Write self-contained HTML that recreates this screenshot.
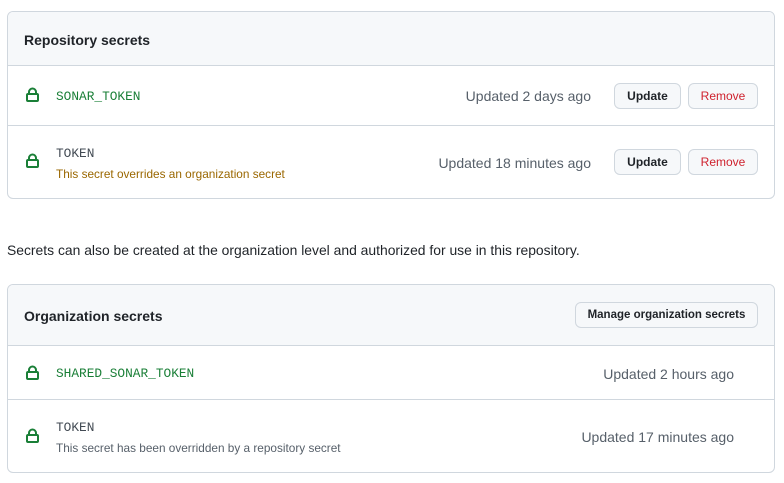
<!DOCTYPE html>
<html><head><style>
body{margin:0;background:#fff;font-family:"Liberation Sans",Arial,sans-serif;font-size:14px;color:#1f2328;}
.box{position:absolute;left:7px;width:766px;border:1px solid #d0d7de;border-radius:6px;overflow:hidden;}
.hd{background:#f6f8fa;border-bottom:1px solid #d0d7de;position:relative;}
.hd span{position:absolute;left:16px;font-weight:bold;font-size:14px;}
.row{position:relative;border-bottom:1px solid #d0d7de;}
.row:last-child{border-bottom:none;}
.lock{position:absolute;left:18px;}
.name{position:absolute;left:48px;font-family:"Liberation Mono",monospace;font-size:12.8px;color:#1a7f37;}
.name.t{color:#424a53;}
.sub{position:absolute;left:48px;font-size:11.8px;color:#9a6700;}
.upd{position:absolute;color:#57606a;font-size:14px;}
.btn{position:absolute;height:26px;box-sizing:border-box;border:1px solid #d0d7de;border-radius:6px;background:#f6f8fa;font-size:12px;font-weight:bold;line-height:24px;text-align:center;}
.rm{color:#cf222e;font-weight:normal;}
</style></head><body>
<svg width="0" height="0" style="position:absolute"><defs><g id="lk"><rect x="1" y="7" width="11" height="7" rx="1" fill="none" stroke="#1a7f37" stroke-width="2"/><path d="M3 7V5a3.5 3.5 0 0 1 7 0v2" fill="none" stroke="#1a7f37" stroke-width="2"/></g></defs></svg>

<div class="box" style="top:11px;height:186px;">
 <div class="hd" style="height:53px;"><span style="top:20px;">Repository secrets</span></div>
 <div class="row" style="height:59px;">
  <svg class="lock" style="top:21px" width="13" height="15"><use href="#lk"/></svg>
  <div class="name" style="top:23px">SONAR_TOKEN</div>
  <div class="upd" style="right:183px;top:22px">Updated 2 days ago</div>
  <div class="btn" style="left:606px;top:17px;width:67px">Update</div>
  <div class="btn rm" style="left:680px;top:17px;width:70px">Remove</div>
 </div>
 <div class="row" style="height:72px;">
  <svg class="lock" style="top:27px" width="13" height="15"><use href="#lk"/></svg>
  <div class="name t" style="top:20px">TOKEN</div>
  <div class="sub" style="top:41px">This secret overrides an organization secret</div>
  <div class="upd" style="right:183px;top:29px">Updated 18 minutes ago</div>
  <div class="btn" style="left:606px;top:23px;width:67px">Update</div>
  <div class="btn rm" style="left:680px;top:23px;width:70px">Remove</div>
 </div>
</div>

<div style="position:absolute;left:7px;top:242px;font-size:13.9px;">Secrets can also be created at the organization level and authorized for use in this repository.</div>

<div class="box" style="top:284px;height:187px;">
 <div class="hd" style="height:60px;"><span style="top:23px;">Organization secrets</span>
  <div class="btn" style="left:567px;top:17px;width:183px;font-size:11.5px">Manage organization secrets</div></div>
 <div class="row" style="height:53px;">
  <svg class="lock" style="top:19px" width="13" height="15"><use href="#lk"/></svg>
  <div class="name" style="top:20px">SHARED_SONAR_TOKEN</div>
  <div class="upd" style="right:40px;top:20px">Updated 2 hours ago</div>
 </div>
 <div class="row" style="height:72px;">
  <svg class="lock" style="top:28px" width="13" height="15"><use href="#lk"/></svg>
  <div class="name t" style="top:20px">TOKEN</div>
  <div class="sub" style="top:41px;color:#57606a">This secret has been overridden by a repository secret</div>
  <div class="upd" style="right:40px;top:29px">Updated 17 minutes ago</div>
 </div>
</div>
</body></html>
